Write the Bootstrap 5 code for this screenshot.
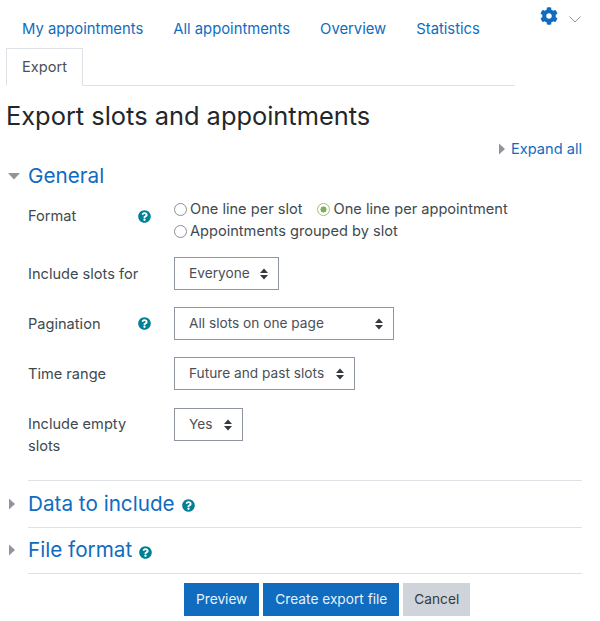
<!DOCTYPE html>
<html lang="en">
<head>
<meta charset="utf-8">
<title>Export slots and appointments</title>
<link rel="stylesheet" href="https://cdn.jsdelivr.net/npm/bootstrap@5.3.0/dist/css/bootstrap.min.css">
<style>
html,body{background:#fff;height:621px;overflow:hidden}
body{font-family:Inter,"Liberation Sans",sans-serif;font-size:14.6px;line-height:22px;color:#404950}
a{color:#0f6cbf;text-decoration:none}
.pg-head{padding:13px 18px 0 6px;gap:25px}
.pg-tabs{width:509px;border-bottom:1px solid #dee2e6;--bs-nav-link-color:#0f6cbf}
.pg-tabs .nav-link{padding:4px 14px 7px;font-size:14.8px;line-height:22px;border-radius:0;margin-bottom:-1px;border:1px solid transparent}
.pg-tabs .row-one:first-child .nav-link{padding-left:15px}
.pg-tabs .row-one{height:35px}
.pg-tabs .nav-link.active{color:#495057;border-color:#dee2e6 #dee2e6 #fff;background:#fff;padding:7px 15px 8px;height:38px;font-size:14.6px}
.pg-gear{margin-top:-6px;gap:11px}
.pg-gear .gear{width:18px;height:18px;fill:#0f6cbf}
.pg-chev{margin-top:7px}
.pg-title{font-size:25.4px;line-height:30px;font-weight:400;color:#22272b;margin:15px 0 0 6px}
.pg-expand{margin:7px 18px 0 0;height:22px;gap:5px}
.tri{width:8px;height:12px;fill:#8f959e;flex:none}
.pg-sec{padding-left:28px;padding-right:18px}
.sec-title{font-size:20.7px;line-height:26px;font-weight:400;margin:0;color:#0f6cbf}
.tw{width:28px;flex:none;padding-left:8px}
.sec-head{margin-left:-28px}
.general-head{margin-top:3px;margin-bottom:9px}
.rw{margin-bottom:17px}
.rw-first{margin-bottom:15px}
.rw-time{margin-bottom:18px}
.rw-last{margin-bottom:23px}
.rw-label{width:146px;flex:none}
.lab-q{width:110px}
.lab-format{margin-top:7px;height:22px}
.lab-empty{margin-top:5px}
.q{width:13px;height:13px;fill:#008196;flex:none}
.q-gap{margin-left:7px}
.fm{flex:1}
.pg-select.form-select{height:33px;border-radius:0;border:1px solid #8f959e;color:#495057;font-size:13.7px;line-height:22px;padding:3px 28px 5px 14px;background-size:8px 12px;background-position:right 10px center;background-image:url("data:image/svg+xml,%3Csvg xmlns='http://www.w3.org/2000/svg' viewBox='0 0 8 12'%3E%3Cpath fill='%23343a40' d='M4 0.5 8 5H0zM4 11.500 0 7h8z'/%3E%3C/svg%3E")}
.w-a{width:105px}.w-b{width:220px}.w-c{width:181px}.w-d{width:69px}
.pg-radio{margin:0 14px 0 0;padding:0;min-height:0;display:flex;align-items:center;gap:3px;height:22px}
.pg-radio .form-check-input{margin:0;float:none;width:13px;height:13px;border:1.5px solid #8a8f94;background:#fff}
.pg-radio .form-check-input:checked{border-color:#9cc17e;background:radial-gradient(circle,#7fae5f 0 2.8px,#fff 3.3px)}
.pg-radio .form-check-label{color:#404950}
.pg-radio .lab-wide{margin-left:1px}
.coll{border-top:1px solid #dee2e6;height:46.500px}
.coll-end{border-top:1px solid #dee2e6}
.coll .q{margin-top:4px}
.pg-btns{margin-top:9px;padding-left:184px;gap:4px}
.pg-btns .btn{border-radius:0;height:33px;padding:4px 12px 6px;font-size:13.7px;line-height:22px;border:0}
.btn-a,.btn-a:hover{background:#0f6cbf;color:#e8f1f9}
.btn-b,.btn-b:hover{background:#ced4da;color:#343a40}
.pg-btns .btn-b{padding-left:11px;padding-right:11px}
</style>
</head>
<body>
<svg width="0" height="0" class="position-absolute"><defs>
<symbol id="qq" viewBox="0 0 512 512"><path d="M504 256c0 136.997-111.043 248-248 248S8 392.997 8 256C8 119.083 119.043 8 256 8s248 111.083 248 248zM262.655 90c-54.497 0-89.255 22.957-116.549 63.758-3.536 5.286-2.353 12.415 2.715 16.258l34.699 26.31c5.205 3.947 12.621 3.008 16.665-2.122 17.864-22.658 30.113-35.797 57.303-35.797 20.429 0 45.698 13.148 45.698 32.958 0 14.976-12.363 22.667-32.534 33.976C247.128 238.528 216 254.941 216 296v4c0 6.627 5.373 12 12 12h56c6.627 0 12-5.373 12-12v-1.333c0-28.462 83.186-29.647 83.186-106.667 0-58.002-60.165-102-116.531-102zM256 338c-25.365 0-46 20.635-46 46 0 25.364 20.635 46 46 46s46-20.636 46-46c0-25.365-20.635-46-46-46z"/></symbol>
</defs></svg>

<div class="pg-head d-flex align-items-start">
  <ul class="nav pg-tabs">
    <li class="nav-item row-one"><a class="nav-link" href="#">My appointments</a></li>
    <li class="nav-item row-one"><a class="nav-link" href="#">All appointments</a></li>
    <li class="nav-item row-one"><a class="nav-link" href="#">Overview</a></li>
    <li class="nav-item row-one"><a class="nav-link" href="#">Statistics</a></li>
    <li class="nav-item w-100"><a class="nav-link active d-inline-block" href="#">Export</a></li>
  </ul>
  <div class="pg-gear d-flex align-items-center">
    <svg class="gear" viewBox="0 0 512 512"><path d="M487.400 315.700l-42.600-24.600c4.300-23.200 4.300-47 0-70.200l42.600-24.600c4.900-2.800 7.100-8.600 5.500-14-11.100-35.600-30-67.800-54.700-94.600-3.800-4.100-10-5.100-14.800-2.300L380.800 110c-17.900-15.400-38.500-27.300-60.800-35.100V25.800c0-5.600-3.900-10.500-9.400-11.700-36.700-8.200-74.300-7.800-109.200 0-5.500 1.200-9.400 6.100-9.400 11.700V75c-22.200 7.900-42.800 19.800-60.800 35.100L88.700 85.500c-4.900-2.800-11-1.900-14.800 2.300-24.700 26.700-43.600 58.900-54.700 94.600-1.700 5.400.6 11.200 5.500 14L67.300 221c-4.300 23.200-4.300 47 0 70.200l-42.600 24.600c-4.900 2.800-7.100 8.600-5.500 14 11.100 35.600 30 67.800 54.700 94.600 3.800 4.100 10 5.100 14.800 2.300l42.600-24.600c17.900 15.400 38.500 27.300 60.800 35.100v49.200c0 5.600 3.900 10.500 9.400 11.700 36.700 8.200 74.300 7.800 109.200 0 5.500-1.200 9.400-6.100 9.400-11.700v-49.200c22.200-7.900 42.800-19.800 60.800-35.100l42.600 24.600c4.900 2.800 11 1.900 14.800-2.300 24.700-26.700 43.600-58.900 54.700-94.600 1.500-5.500-.7-11.300-5.600-14.100zM256 336c-44.100 0-80-35.900-80-80s35.900-80 80-80 80 35.900 80 80-35.900 80-80 80z"/></svg>
    <svg class="pg-chev" width="12" height="7" viewBox="0 0 12 7"><path d="M.5.500 6 6 11.500.5" fill="none" stroke="#8f959e" stroke-width="1"/></svg>
  </div>
</div>

<h1 class="pg-title">Export slots and appointments</h1>

<div class="pg-expand d-flex justify-content-end align-items-center">
  <svg class="tri" viewBox="0 0 8 12"><path d="M1 0.500 7 6 1 11.500z"/></svg>
  <a href="#">Expand all</a>
</div>

<form class="pg-sec" onsubmit="return false">
  <div class="sec-head general-head d-flex align-items-center">
    <span class="tw d-flex"><svg width="12" height="8" viewBox="0 0 12 8"><path d="M0 1h12L6 7.500z" fill="#8f959e"/></svg></span>
    <h3 class="sec-title"><a href="#">General</a></h3>
  </div>

  <div class="rw rw-first d-flex align-items-start">
    <div class="rw-label lab-format d-flex align-items-center"><span class="lab-q">Format</span><svg class="q"><use href="#qq"/></svg></div>
    <div class="fm d-flex flex-wrap">
      <div class="form-check pg-radio"><input class="form-check-input" type="radio" name="f" id="f1"><label class="form-check-label" for="f1">One line per slot</label></div>
      <div class="form-check pg-radio"><input class="form-check-input" type="radio" name="f" id="f2" checked><label class="form-check-label lab-wide" for="f2">One line per appointment</label></div>
      <div class="form-check pg-radio"><input class="form-check-input" type="radio" name="f" id="f3"><label class="form-check-label" for="f3">Appointments grouped by slot</label></div>
    </div>
  </div>

  <div class="rw d-flex align-items-center">
    <div class="rw-label">Include slots for</div>
    <select class="form-select pg-select w-a"><option>Everyone</option></select>
  </div>

  <div class="rw d-flex align-items-center">
    <div class="rw-label d-flex align-items-center"><span class="lab-q">Pagination</span><svg class="q"><use href="#qq"/></svg></div>
    <select class="form-select pg-select w-b"><option>All slots on one page</option></select>
  </div>

  <div class="rw rw-time d-flex align-items-center">
    <div class="rw-label">Time range</div>
    <select class="form-select pg-select w-c"><option>Future and past slots</option></select>
  </div>

  <div class="rw rw-last d-flex align-items-start">
    <div class="rw-label lab-empty">Include empty<br>slots</div>
    <select class="form-select pg-select w-d"><option>Yes</option></select>
  </div>

  <div class="coll d-flex align-items-center">
    <span class="tw d-flex sec-head"><svg class="tri" viewBox="0 0 8 12"><path d="M1 0.500 7 6 1 11.500z"/></svg></span>
    <h3 class="sec-title"><a href="#">Data to include</a></h3>
    <svg class="q q-gap"><use href="#qq"/></svg>
  </div>
  <div class="coll d-flex align-items-center">
    <span class="tw d-flex sec-head"><svg class="tri" viewBox="0 0 8 12"><path d="M1 0.500 7 6 1 11.500z"/></svg></span>
    <h3 class="sec-title"><a href="#">File format</a></h3>
    <svg class="q q-gap"><use href="#qq"/></svg>
  </div>
  <div class="coll-end"></div>
</form>

<div class="pg-btns d-flex">
  <button class="btn btn-a" type="button">Preview</button>
  <button class="btn btn-a" type="button">Create export file</button>
  <button class="btn btn-b" type="button">Cancel</button>
</div>
<script src="https://cdn.jsdelivr.net/npm/bootstrap@5.3.0/dist/js/bootstrap.bundle.min.js"></script>
</body>
</html>
